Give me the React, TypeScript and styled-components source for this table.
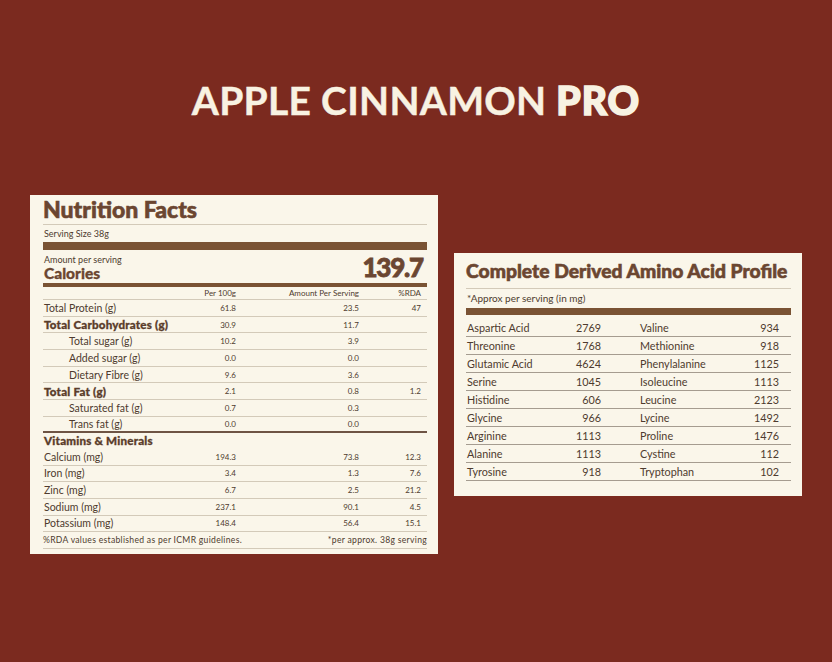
import React from "react";
import styled, { createGlobalStyle } from "styled-components";

const Global = createGlobalStyle`
  html, body { margin: 0; padding: 0; }
  body { background: #7b2a1f; font-family: Lato, "Open Sans", sans-serif; }
`;

const Page = styled.div`
  width: 832px;
  height: 662px;
  background: #7b2a1f;
  display: flex;
  flex-direction: column;
  align-items: center;
  padding-top: 81px;
  box-sizing: border-box;
`;

const Title = styled.h1`
  margin: 0;
  font-family: Lato, sans-serif;
  font-size: 39px;
  line-height: 39px;
  font-weight: 700;
  color: #f8f2e2;
  letter-spacing: 0.3px;
  -webkit-text-stroke: 0.4px #f8f2e2;
  b { font-weight: 900; -webkit-text-stroke: 1.6px #f8f2e2; letter-spacing: 1px; }
`;

const Cards = styled.div`
  display: flex;
  align-items: center;
  gap: 16px;
  margin-top: 75px;
`;

const Card = styled.div<{ $w: number }>`
  width: ${(p) => p.$w}px;
  background: #faf6ea;
  box-sizing: border-box;
  color: #4e3b2e;
`;

const LeftCard = styled(Card)`
  padding: 0 11px 5px 13px;
`;

const RightCard = styled(Card)`
  padding: 0 11px 15px 12px;
`;

const CardTitle = styled.div<{ $size: number; $h: number }>`
  font-size: ${(p) => p.$size}px;
  line-height: ${(p) => p.$h}px;
  height: ${(p) => p.$h}px;
  font-weight: 900;
  color: #6b4631;
  -webkit-text-stroke: 0.6px #6b4631;
  border-bottom: 1px solid #d3cab9;
  white-space: nowrap;
`;

const SmallLine = styled.div<{ $h: number; $size: number }>`
  font-size: ${(p) => p.$size}px;
  line-height: ${(p) => p.$h}px;
  height: ${(p) => p.$h}px;
  color: #4e3b2e;
  padding-left: 1px;
`;

const Bar = styled.div<{ $h: number }>`
  height: ${(p) => p.$h}px;
  background: #7a5334;
`;

const CaloriesBlock = styled.div`
  height: 33px;
  display: flex;
  justify-content: space-between;
  align-items: flex-end;
`;

const CalLeft = styled.div`
  display: flex;
  flex-direction: column;
  padding-bottom: 2px;
  padding-left: 1px;
`;

const AmountLabel = styled.div`
  font-size: 9px;
  line-height: 10px;
  color: #4e3b2e;
`;

const CaloriesLabel = styled.div`
  font-size: 15.5px;
  line-height: 16px;
  font-weight: 900;
  color: #6b4631;
  -webkit-text-stroke: 0.3px #6b4631;
`;

const CalValue = styled.div`
  font-size: 26px;
  line-height: 26px;
  font-weight: 900;
  color: #6b4631;
  -webkit-text-stroke: 0.8px #6b4631;
  letter-spacing: -1.2px;
  margin-bottom: 3px;
  margin-right: 4px;
`;

const NRow = styled.div<{ $h: number; $border?: string }>`
  display: grid;
  grid-template-columns: 1fr 46px 123px 62px;
  padding-right: 6px;
  height: ${(p) => p.$h}px;
  align-items: center;
  border-bottom: ${(p) => p.$border || "none"};
`;

const Label = styled.span<{ $bold?: boolean; $indent?: boolean }>`
  font-size: ${(p) => (p.$bold ? 11.6 : 10.5)}px;
  font-weight: ${(p) => (p.$bold ? 900 : 400)};
  color: ${(p) => (p.$bold ? "#5a3d2b" : "#4e3b2e")};
  -webkit-text-stroke: ${(p) => (p.$bold ? "0.3px #5a3d2b" : "0")};
  letter-spacing: ${(p) => (p.$bold ? 0.2 : 0)}px;
  padding-left: ${(p) => (p.$indent ? 26 : 1)}px;
  white-space: nowrap;
`;

const Num = styled.span`
  font-size: 8px;
  text-align: right;
  color: #4e3b2e;
`;

const Head = styled.span`
  font-size: 8px;
  text-align: right;
  color: #4e3b2e;
`;

const Footer = styled.div`
  display: flex;
  justify-content: space-between;
  height: 16px;
  align-items: center;
  font-size: 8.6px;
  color: #4e3b2e;
  border-bottom: 1px solid #d3cab9;
  letter-spacing: 0.3px;
`;

const ARow = styled.div`
  display: grid;
  grid-template-columns: 90px 44px 39px 95px 44px;
  padding: 0 13px 0 1px;
  height: 17px;
  align-items: center;
  border-bottom: 1px solid #a59c90;
  font-size: 10.8px;
  color: #4e3b2e;
`;

const AName = styled.span`
  white-space: nowrap;
`;

const AVal = styled.span`
  text-align: right;
`;

const Spacer = styled.span``;

const thin = "1px solid #d3cab9";
const thick = "2px solid #6e5444";

type Row = { l: string; a: string; b: string; c?: string; bold?: boolean; indent?: boolean };

const macro: Row[] = [
  { l: "Total Protein (g)", a: "61.8", b: "23.5", c: "47" },
  { l: "Total Carbohydrates (g)", a: "30.9", b: "11.7", bold: true },
  { l: "Total sugar (g)", a: "10.2", b: "3.9", indent: true },
  { l: "Added sugar (g)", a: "0.0", b: "0.0", indent: true },
  { l: "Dietary Fibre (g)", a: "9.6", b: "3.6", indent: true },
  { l: "Total Fat (g)", a: "2.1", b: "0.8", c: "1.2", bold: true },
  { l: "Saturated fat (g)", a: "0.7", b: "0.3", indent: true },
  { l: "Trans fat (g)", a: "0.0", b: "0.0", indent: true },
];

const minerals: Row[] = [
  { l: "Calcium (mg)", a: "194.3", b: "73.8", c: "12.3" },
  { l: "Iron (mg)", a: "3.4", b: "1.3", c: "7.6" },
  { l: "Zinc (mg)", a: "6.7", b: "2.5", c: "21.2" },
  { l: "Sodium (mg)", a: "237.1", b: "90.1", c: "4.5" },
  { l: "Potassium (mg)", a: "148.4", b: "56.4", c: "15.1" },
];

const amino: [string, string, string, string][] = [
  ["Aspartic Acid", "2769", "Valine", "934"],
  ["Threonine", "1768", "Methionine", "918"],
  ["Glutamic Acid", "4624", "Phenylalanine", "1125"],
  ["Serine", "1045", "Isoleucine", "1113"],
  ["Histidine", "606", "Leucine", "2123"],
  ["Glycine", "966", "Lycine", "1492"],
  ["Arginine", "1113", "Proline", "1476"],
  ["Alanine", "1113", "Cystine", "112"],
  ["Tyrosine", "918", "Tryptophan", "102"],
];

const RowsWrap = styled.div<{ $mt?: number }>`
  margin-top: ${(p) => p.$mt || 0}px;
`;

export default function App() {
  return (
    <Page>
      <Global />
      <Title>
        APPLE CINNAMON <b>PRO</b>
      </Title>
      <Cards>
        <LeftCard $w={408}>
          <CardTitle $size={23} $h={29}>Nutrition Facts</CardTitle>
          <SmallLine $h={17} $size={9}>Serving Size 38g</SmallLine>
          <Bar $h={8} />
          <CaloriesBlock>
            <CalLeft>
              <AmountLabel>Amount per serving</AmountLabel>
              <CaloriesLabel>Calories</CaloriesLabel>
            </CalLeft>
            <CalValue>139.7</CalValue>
          </CaloriesBlock>
          <Bar $h={4} />
          <NRow $h={12} $border={thin}>
            <Spacer />
            <Head>Per 100g</Head>
            <Head>Amount Per Serving</Head>
            <Head>%RDA</Head>
          </NRow>
          {macro.map((r, i) => (
            <NRow key={r.l} $h={i === macro.length - 1 ? 14 : 15.7} $border={i === macro.length - 1 ? thick : thin}>
              <Label $bold={r.bold} $indent={r.indent}>{r.l}</Label>
              <Num>{r.a}</Num>
              <Num>{r.b}</Num>
              <Num>{r.c || ""}</Num>
            </NRow>
          ))}
          <NRow $h={16}>
            <Label $bold>Vitamins &amp; Minerals</Label>
          </NRow>
          {minerals.map((r) => (
            <NRow key={r.l} $h={15.7} $border={thin}>
              <Label>{r.l}</Label>
              <Num>{r.a}</Num>
              <Num>{r.b}</Num>
              <Num>{r.c}</Num>
            </NRow>
          ))}
          <Footer>
            <span>%RDA values established as per ICMR guidelines.</span>
            <span>*per approx. 38g serving</span>
          </Footer>
        </LeftCard>
        <RightCard $w={348}>
          <CardTitle $size={19.3} $h={35}>Complete Derived Amino Acid Profile</CardTitle>
          <SmallLine $h={19} $size={10}>*Approx per serving (in mg)</SmallLine>
          <Bar $h={7} />
          <RowsWrap $mt={4}>
            {amino.map((r) => (
              <ARow key={r[0]}>
                <AName>{r[0]}</AName>
                <AVal>{r[1]}</AVal>
                <Spacer />
                <AName>{r[2]}</AName>
                <AVal>{r[3]}</AVal>
              </ARow>
            ))}
          </RowsWrap>
        </RightCard>
      </Cards>
    </Page>
  );
}
